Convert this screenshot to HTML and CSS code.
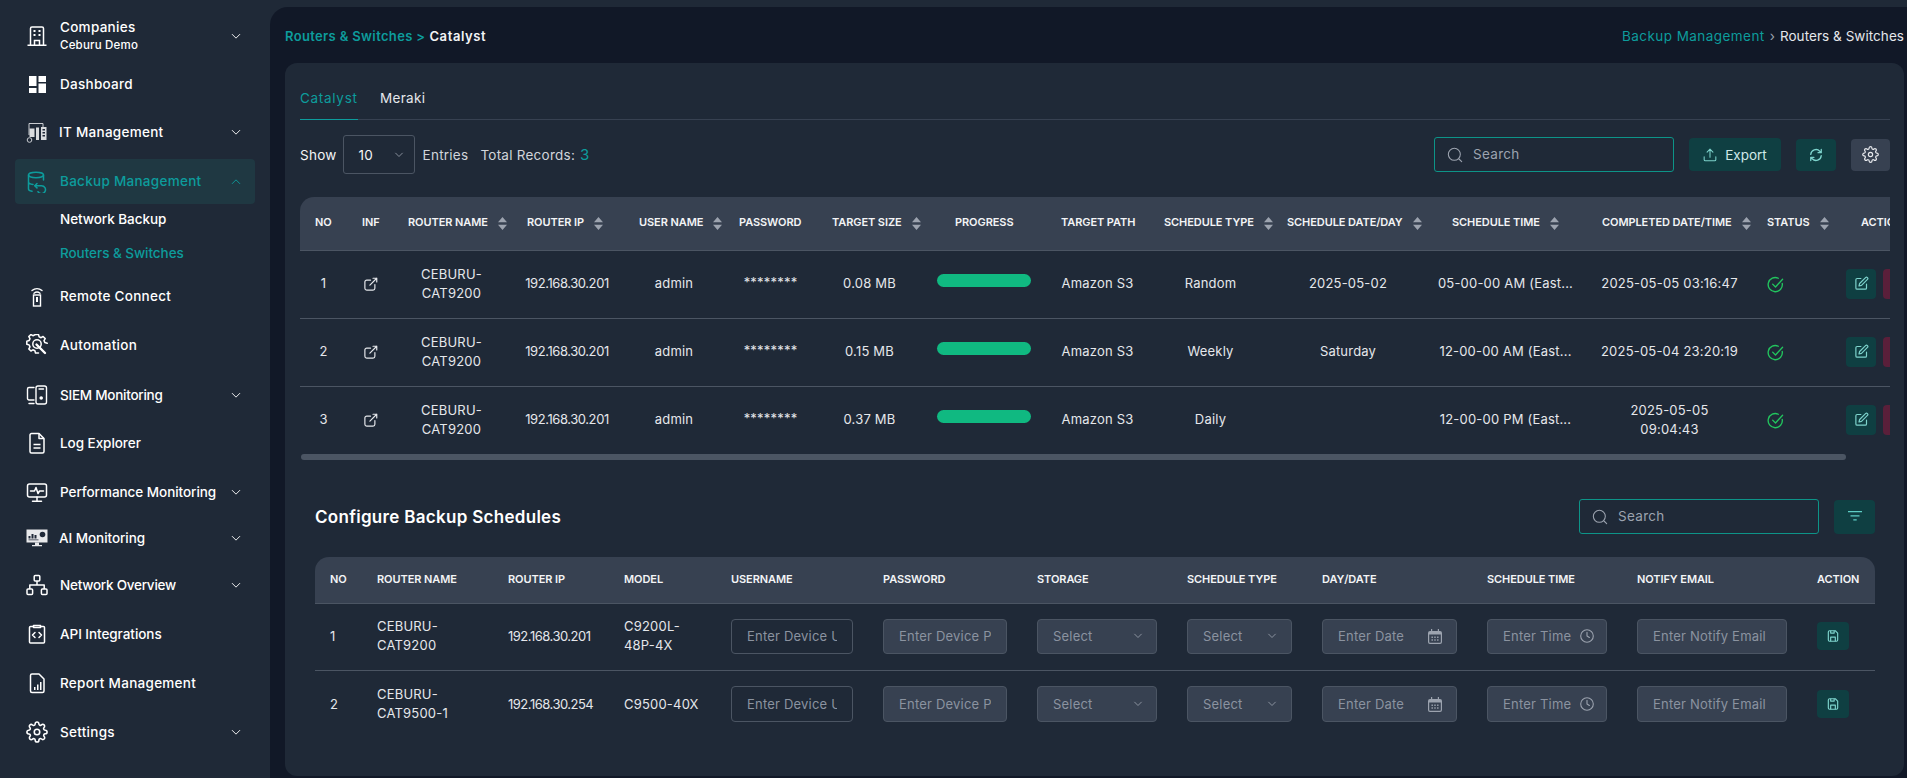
FILE: index.html
```html
<!DOCTYPE html>
<html lang="en">
<head>
<meta charset="utf-8">
<title>Routers &amp; Switches</title>
<link rel="stylesheet" href="styles.css">
</head>
<body>
<svg class="defs" width="0" height="0" aria-hidden="true">
  <symbol id="chev" viewBox="0 0 12 8"><path d="M1.5 1.5 6 6l4.5-4.5" fill="none" stroke="currentColor" stroke-width="1.1" stroke-linecap="round" stroke-linejoin="round"/></symbol>
  <symbol id="sort" viewBox="0 0 9 13"><path d="M4.5 0 9 5.2H0zM0 7.8h9L4.5 13z" fill="currentColor"/></symbol>
  <symbol id="ext" viewBox="0 0 24 24"><g fill="none" stroke="currentColor" stroke-width="1.9" stroke-linecap="round" stroke-linejoin="round"><path d="M12 5H6a3 3 0 0 0-3 3v10a3 3 0 0 0 3 3h10a3 3 0 0 0 3-3v-6"/><path d="M11 13 22 2M16 2h6v6"/></g></symbol>
  <symbol id="check" viewBox="0 0 24 24"><g fill="none" stroke="currentColor" stroke-width="1.9" stroke-linecap="round" stroke-linejoin="round"><path d="M21.5 10.5A10 10 0 1 1 16 3.2"/><path d="m8 11.5 4 4 10-11"/></g></symbol>
  <symbol id="edit" viewBox="0 0 24 24"><g fill="none" stroke="currentColor" stroke-width="1.9" stroke-linecap="round" stroke-linejoin="round"><path d="M11 4H5a2 2 0 0 0-2 2v13a2 2 0 0 0 2 2h13a2 2 0 0 0 2-2v-6"/><path d="M18.5 2.5a2.1 2.1 0 0 1 3 3L12 15l-4 1 1-4z"/></g></symbol>
  <symbol id="search" viewBox="0 0 24 24"><g fill="none" stroke="currentColor" stroke-width="1.6" stroke-linecap="round"><circle cx="11" cy="11" r="9"/><path d="m18 18 4 4"/></g></symbol>
  <symbol id="gear" viewBox="0 0 24 24"><g fill="none" stroke="currentColor" stroke-width="1.7" stroke-linecap="round" stroke-linejoin="round"><circle cx="12" cy="12" r="3"/><path d="M19.4 15a1.65 1.65 0 0 0 .33 1.82l.06.06a2 2 0 0 1 0 2.83 2 2 0 0 1-2.83 0l-.06-.06a1.65 1.65 0 0 0-1.82-.33 1.65 1.65 0 0 0-1 1.51V21a2 2 0 0 1-2 2 2 2 0 0 1-2-2v-.09A1.65 1.65 0 0 0 9 19.4a1.65 1.65 0 0 0-1.82.33l-.06.06a2 2 0 0 1-2.83 0 2 2 0 0 1 0-2.83l.06-.06a1.65 1.65 0 0 0 .33-1.82 1.65 1.65 0 0 0-1.51-1H3a2 2 0 0 1-2-2 2 2 0 0 1 2-2h.09A1.65 1.65 0 0 0 4.6 9a1.65 1.65 0 0 0-.33-1.82l-.06-.06a2 2 0 0 1 0-2.83 2 2 0 0 1 2.83 0l.06.06a1.65 1.65 0 0 0 1.82.33H9a1.65 1.65 0 0 0 1-1.51V3a2 2 0 0 1 2-2 2 2 0 0 1 2 2v.09a1.65 1.65 0 0 0 1 1.51 1.65 1.65 0 0 0 1.82-.33l.06-.06a2 2 0 0 1 2.83 0 2 2 0 0 1 0 2.83l-.06.06a1.65 1.65 0 0 0-.33 1.82V9a1.65 1.65 0 0 0 1.51 1H21a2 2 0 0 1 2 2 2 2 0 0 1-2 2h-.09a1.65 1.65 0 0 0-1.51 1z"/></g></symbol>
  <symbol id="cal" viewBox="0 0 14 15"><path d="M3 0h1.2v2H9.800V0H11v2h1a2 2 0 0 1 2 2v9a2 2 0 0 1-2 2H2a2 2 0 0 1-2-2V4a2 2 0 0 1 2-2h1zM1.200 5.500V13a.8.800 0 0 0 .8.800h10a.8.800 0 0 0 .8-.8V5.500z" fill="currentColor" fill-rule="evenodd"/><path d="M3.500 7.500h1.400v1.400H3.500zm2.800 0h1.400v1.400H6.300zm2.800 0h1.400v1.400H9.100zM3.500 10.300h1.400v1.400H3.500zm2.800 0h1.400v1.400H6.300zm2.800 0h1.400v1.400H9.100z" fill="currentColor"/></symbol>
  <symbol id="clock" viewBox="0 0 14 14"><g fill="none" stroke="currentColor" stroke-width="1.1" stroke-linecap="round" stroke-linejoin="round"><circle cx="7" cy="7" r="6.300"/><path d="M7 3.300V7l2.400 1.500"/></g></symbol>
  <symbol id="save" viewBox="0 0 24 24"><g fill="none" stroke="currentColor" stroke-width="2" stroke-linejoin="round"><path d="M4 5a2 2 0 0 1 2-2h10l4 4v12a2 2 0 0 1-2 2H6a2 2 0 0 1-2-2z"/><path d="M8 21v-7h8v7M8 3v4h6V3"/></g></symbol>
</svg>

<div class="app">
  <aside class="sidebar">
    <nav class="nav">
      <a class="item">
        <svg class="ico" viewBox="0 0 22 22"><g fill="none" stroke="#fff" stroke-width="1.500"><path d="M4.500 20V3.500a1.500 1.500 0 0 1 1.500-1.500h10a1.500 1.500 0 0 1 1.500 1.500V20M1.500 20.300h19M8.500 20v-4.500h5V20"/></g><path d="M7.500 5h2v2h-2zm5 0h2v2h-2zm-5 4h2v2h-2zm5 0h2v2h-2z" fill="#fff"/></svg>
        <span class="label stack"><span>Companies</span><small>Ceburu Demo</small></span>
        <svg class="chev"><use href="#chev"/></svg>
      </a>
      <a class="item">
        <svg class="ico" viewBox="0 0 22 22"><path d="M3 3h7.500v10H3zM12.500 3H20v6h-7.500zM3 15h7.500v5H3zM12.500 10.500H20V20h-7.500z" fill="#fff"/></svg>
        <span class="label">Dashboard</span>
      </a>
      <a class="item tight">
        <svg class="ico" viewBox="0 0 22 22"><g fill="none" stroke="#c9ccd1" stroke-width="1"><path d="M3 14V2.500h14V6"/><circle cx="3.500" cy="19" r="2.300"/></g><path d="M3.500 7.500h5V16h-5zM10 6.500h3V19h-3zM15 6h5.500v13H15z" fill="#d9dbde"/><path d="M16.500 8h2.500v1.500h-2.500zm0 3h2.500v1.500h-2.500zm0 3h2.500v1.500h-2.500z" fill="#202938"/></svg>
        <span class="label">IT Management</span>
        <svg class="chev"><use href="#chev"/></svg>
      </a>
      <a class="item active">
        <svg class="ico" viewBox="0 0 22 22"><g fill="none" stroke="currentColor" stroke-width="1.500" stroke-linecap="round" stroke-linejoin="round"><ellipse cx="10" cy="4" rx="7.500" ry="2.700"/><path d="M2.500 4v14c0 1.200 1.500 2 3.500 2.300M17.500 4v5M2.500 11c0 1.300 2 2.200 4.500 2.500"/><path d="M11 12.500 8.800 14.700l2.200 2.200"/><path d="M9 14.700h6.500a4 4 0 1 1-3.500 6"/></g></svg>
        <span class="label raise">Backup Management</span>
        <svg class="chev up"><use href="#chev"/></svg>
      </a>
      <div class="sub">
        <a class="sub-item tk">Network Backup</a>
        <a class="sub-item current tk">Routers &amp; Switches</a>
      </div>
      <a class="item after-sub">
        <svg class="ico" viewBox="0 0 22 22"><g fill="none" stroke="#fff" stroke-width="1.400" stroke-linecap="round"><path d="M6 5.500a8 8 0 0 1 10 0M8 8.200a4.800 4.800 0 0 1 6 0"/><rect x="7.500" y="10" width="7" height="11"/></g><path d="M10 12h2v5h-2z" fill="#fff"/></svg>
        <span class="label">Remote Connect</span>
      </a>
      <a class="item mt1">
        <svg class="ico" viewBox="0 0 22 22"><g fill="none" stroke="#fff" stroke-width="1.500" stroke-linejoin="round" stroke-linecap="round"><path d="M12.500 19h-3l-.6-2.300-2-.9-2 1.200-2.100-2.100 1.200-2-.9-2L.8 10.200v-3l2.300-.6.900-2-1.200-2L4.900.5l2 1.200 2-.9L9.500.5h3l.6 2.300 2 .9 2-1.200 2.100 2.100-1.200 2 .9 2 2.300.6"/><circle cx="11" cy="10" r="4.200"/></g><path d="M10.500 10.500 19 19" stroke="#fff" stroke-width="2.400" stroke-linecap="round"/></svg>
        <span class="label">Automation</span>
      </a>
      <a class="item mt2">
        <svg class="ico" viewBox="0 0 22 22"><g fill="none" stroke="#fff" stroke-width="1.400" stroke-linecap="round" stroke-linejoin="round"><path d="M8 16H3a1.500 1.500 0 0 1-1.500-1.500V5A1.500 1.500 0 0 1 3 3.500h5M3 19.500h5"/><rect x="10" y="2" width="10.500" height="18" rx="2"/><path d="M13 5h4.500"/></g><circle cx="15.200" cy="14" r="1.800" fill="#fff"/></svg>
        <span class="label tk2">SIEM Monitoring</span>
        <svg class="chev"><use href="#chev"/></svg>
      </a>
      <a class="item">
        <svg class="ico" viewBox="0 0 22 22"><g fill="none" stroke="#fff" stroke-width="1.500" stroke-linejoin="round"><path d="M4 3a1.500 1.500 0 0 1 1.500-1.500h7.500l5 5V19.500a1.500 1.500 0 0 1-1.500 1.500h-11A1.500 1.500 0 0 1 4 19.500z"/><path d="M13 1.500v5h5"/><path d="M7.500 12.500h7M7.500 16h7"/></g></svg>
        <span class="label tk">Log Explorer</span>
      </a>
      <a class="item mt1">
        <svg class="ico" viewBox="0 0 22 22"><g fill="none" stroke="#fff" stroke-width="1.500" stroke-linejoin="round" stroke-linecap="round"><rect x="1.500" y="3" width="19" height="13" rx="2"/><path d="M11 16v4M6.500 20.300h9M4.500 10h4l1.500-3.500 2 6 1.500-2.500h4"/></g></svg>
        <span class="label tk">Performance Monitoring</span>
        <svg class="chev"><use href="#chev"/></svg>
      </a>
      <a class="item tight mtn2">
        <svg class="ico" viewBox="0 0 22 22"><path d="M.5 2.500h21v13H.500z" fill="#e8e9eb"/><path d="M2.500 9h2v2.500h-2zm3-2h2v4.500h-2zm3 1h2v3.500h-2zM2.500 12.500h10v.8h-10z" fill="#202938"/><circle cx="16.500" cy="7.500" r="2.800" fill="#202938"/><path d="M9 15.500h4v2.500h3v1.200H6V18h3z" fill="#e8e9eb"/></svg>
        <span class="label tk">AI Monitoring</span>
        <svg class="chev"><use href="#chev"/></svg>
      </a>
      <a class="item mtn1">
        <svg class="ico" viewBox="0 0 22 22"><g fill="none" stroke="#fff" stroke-width="1.500" stroke-linejoin="round"><rect x="8.200" y="1.500" width="5.600" height="5.600" rx="1"/><rect x="1" y="15" width="5.600" height="5.600" rx="1"/><rect x="15.400" y="15" width="5.600" height="5.600" rx="1"/><path d="M11 7v4M3.800 15v-4h14.400v4"/></g></svg>
        <span class="label tk2">Network Overview</span>
        <svg class="chev"><use href="#chev"/></svg>
      </a>
      <a class="item mt1">
        <svg class="ico" viewBox="0 0 22 22"><g fill="none" stroke="#fff" stroke-width="1.500" stroke-linejoin="round" stroke-linecap="round"><path d="M7.500 3.500H4.500a1 1 0 0 0-1 1V19a1 1 0 0 0 1 1h13a1 1 0 0 0 1-1V4.500a1 1 0 0 0-1-1h-3"/><path d="M7.500 2.500h7v2h-7z"/><path d="M9 9.500 6.500 12 9 14.500M13 9.500l2.500 2.500-2.500 2.500"/></g></svg>
        <span class="label tk">API Integrations</span>
      </a>
      <a class="item mt1">
        <svg class="ico" viewBox="0 0 22 22"><path d="M4.500 3.500a1.500 1.500 0 0 1 1.500-1.500h7l5 5v12a1.500 1.500 0 0 1-1.500 1.500H6A1.500 1.500 0 0 1 4.500 19z" fill="none" stroke="#fff" stroke-width="1.500" stroke-linejoin="round"/><path d="M8 15h1.500v3H8zm3-2.500h1.500V18H11zm3-2.500h1.500v8H14z" fill="#fff"/></svg>
        <span class="label">Report Management</span>
      </a>
      <a class="item mt1">
        <svg class="ico gear-ico"><use href="#gear"/></svg>
        <span class="label">Settings</span>
        <svg class="chev"><use href="#chev"/></svg>
      </a>
    </nav>
  </aside>

  <main class="main">
    <header class="page-head">
      <div class="crumb-left"><span class="teal">Routers &amp; Switches &gt;</span><span class="crumb-now">Catalyst</span></div>
      <div class="crumb-right"><span class="teal crumb-root">Backup Management</span><span class="sep">›</span><span class="crumb-end">Routers &amp; Switches</span></div>
    </header>

    <section class="card">
      <div class="tabs">
        <a class="tab on">Catalyst</a>
        <a class="tab">Meraki</a>
      </div>

      <div class="toolbar">
        <div class="show">
          <span>Show</span>
          <div class="select-box"><span>10</span><svg class="chev small"><use href="#chev"/></svg></div>
          <span class="dim">Entries</span>
          <span class="total dim">Total Records:</span>
          <span class="teal count">3</span>
        </div>
        <div class="tools">
          <label class="search wide"><svg class="s-ico"><use href="#search"/></svg><input type="text" placeholder="Search"></label>
          <button class="btn export"><svg viewBox="0 0 24 24" class="btn-ico"><g fill="none" stroke="currentColor" stroke-width="1.800" stroke-linecap="round" stroke-linejoin="round"><path d="M2 15v5a2 2 0 0 0 2 2h16a2 2 0 0 0 2-2v-5M12 16V2M7 7l5-5 5 5"/></g></svg>Export</button>
          <button class="btn square"><svg viewBox="0 0 24 24" class="btn-ico"><g fill="none" stroke="currentColor" stroke-width="2.200" stroke-linecap="round" stroke-linejoin="round"><path d="M3 11a9 9 0 0 1 15.500-5.500L21 8M21 2.500V8h-5.500M21 13a9 9 0 0 1-15.500 5.500L3 16M3 21.500V16h5.500"/></g></svg></button>
          <button class="btn square gray"><svg class="btn-ico big"><use href="#gear"/></svg></button>
        </div>
      </div>

      <div class="table-clip">
        <table class="grid one">
          <colgroup>
            <col class="c-no"><col class="c-inf"><col class="c-rname"><col class="c-rip"><col class="c-user"><col class="c-pass"><col class="c-tsize"><col class="c-prog"><col class="c-tpath"><col class="c-stype"><col class="c-sdate"><col class="c-stime"><col class="c-comp"><col class="c-status"><col class="c-action">
          </colgroup>
          <thead>
            <tr>
              <th>NO</th>
              <th>INF</th>
              <th>ROUTER NAME<svg class="sort"><use href="#sort"/></svg></th>
              <th class="p-rip">ROUTER IP<svg class="sort"><use href="#sort"/></svg></th>
              <th>USER NAME<svg class="sort"><use href="#sort"/></svg></th>
              <th>PASSWORD</th>
              <th>TARGET SIZE<svg class="sort"><use href="#sort"/></svg></th>
              <th class="p-prog">PROGRESS</th>
              <th>TARGET PATH</th>
              <th>SCHEDULE TYPE<svg class="sort"><use href="#sort"/></svg></th>
              <th>SCHEDULE DATE/DAY<svg class="sort"><use href="#sort"/></svg></th>
              <th class="p-stime">SCHEDULE TIME<svg class="sort"><use href="#sort"/></svg></th>
              <th>COMPLETED DATE/TIME<svg class="sort"><use href="#sort"/></svg></th>
              <th>STATUS<svg class="sort"><use href="#sort"/></svg></th>
              <th class="p-action">ACTION</th>
            </tr>
          </thead>
          <tbody>
            <tr>
              <td>1</td>
              <td><svg class="ext"><use href="#ext"/></svg></td>
              <td>CEBURU-<br>CAT9200</td>
              <td class="ip">192.168.30.201</td>
              <td>admin</td>
              <td class="stars">********</td>
              <td>0.08 MB</td>
              <td><div class="bar"></div></td>
              <td>Amazon S3</td>
              <td>Random</td>
              <td>2025-05-02</td>
              <td>05-00-00 AM (East...</td>
              <td>2025-05-05 03:16:47</td>
              <td class="left"><svg class="check"><use href="#check"/></svg></td>
              <td class="left acts"><span class="act edit"><svg><use href="#edit"/></svg></span><span class="act del"></span></td>
            </tr>
            <tr>
              <td>2</td>
              <td><svg class="ext"><use href="#ext"/></svg></td>
              <td>CEBURU-<br>CAT9200</td>
              <td class="ip">192.168.30.201</td>
              <td>admin</td>
              <td class="stars">********</td>
              <td>0.15 MB</td>
              <td><div class="bar"></div></td>
              <td>Amazon S3</td>
              <td>Weekly</td>
              <td>Saturday</td>
              <td>12-00-00 AM (East...</td>
              <td>2025-05-04 23:20:19</td>
              <td class="left"><svg class="check"><use href="#check"/></svg></td>
              <td class="left acts"><span class="act edit"><svg><use href="#edit"/></svg></span><span class="act del"></span></td>
            </tr>
            <tr>
              <td>3</td>
              <td><svg class="ext"><use href="#ext"/></svg></td>
              <td>CEBURU-<br>CAT9200</td>
              <td class="ip">192.168.30.201</td>
              <td>admin</td>
              <td class="stars">********</td>
              <td>0.37 MB</td>
              <td><div class="bar"></div></td>
              <td>Amazon S3</td>
              <td>Daily</td>
              <td></td>
              <td>12-00-00 PM (East...</td>
              <td>2025-05-05<br>09:04:43</td>
              <td class="left"><svg class="check"><use href="#check"/></svg></td>
              <td class="left acts"><span class="act edit"><svg><use href="#edit"/></svg></span><span class="act del"></span></td>
            </tr>
          </tbody>
        </table>
      </div>
      <div class="scroll"><div class="thumb"></div></div>

      <div class="config">
        <div class="config-head">
          <h2>Configure Backup Schedules</h2>
          <div class="config-tools">
            <label class="search narrow"><svg class="s-ico"><use href="#search"/></svg><input type="text" placeholder="Search"></label>
            <button class="btn filter"><svg viewBox="0 0 14 11" class="filter-ico"><path d="M0 .7h14M2.500 4.800h9M5.300 8.900h3.400" fill="none" stroke="currentColor" stroke-width="1.300"/></svg></button>
          </div>
        </div>
        <table class="grid two">
          <colgroup>
            <col class="d-no"><col class="d-rname"><col class="d-rip"><col class="d-model"><col class="d-user"><col class="d-pass"><col class="d-stor"><col class="d-stype"><col class="d-day"><col class="d-time"><col class="d-mail"><col class="d-act">
          </colgroup>
          <thead>
            <tr>
              <th>NO</th><th>ROUTER NAME</th><th>ROUTER IP</th><th>MODEL</th><th>USERNAME</th><th>PASSWORD</th><th>STORAGE</th><th>SCHEDULE TYPE</th><th>DAY/DATE</th><th>SCHEDULE TIME</th><th>NOTIFY EMAIL</th><th>ACTION</th>
            </tr>
          </thead>
          <tbody>
            <tr class="r1">
              <td>1</td>
              <td>CEBURU-<br>CAT9200</td>
              <td class="ip">192.168.30.201</td>
              <td>C9200L-<br>48P-4X</td>
              <td><input class="field user" type="text" placeholder="Enter Device Username"></td>
              <td><input class="field filled pass" type="text" placeholder="Enter Device Password"></td>
              <td><div class="field filled picker stor"><span>Select</span><svg class="chev small"><use href="#chev"/></svg></div></td>
              <td><div class="field filled picker stype"><span>Select</span><svg class="chev small"><use href="#chev"/></svg></div></td>
              <td><div class="field filled picker date"><span>Enter Date</span><svg class="cal"><use href="#cal"/></svg></div></td>
              <td><div class="field filled picker time"><span>Enter Time</span><svg class="clock"><use href="#clock"/></svg></div></td>
              <td><input class="field filled mail" type="text" placeholder="Enter Notify Email"></td>
              <td><span class="save"><svg><use href="#save"/></svg></span></td>
            </tr>
            <tr class="r2">
              <td>2</td>
              <td>CEBURU-<br>CAT9500-1</td>
              <td class="ip">192.168.30.254</td>
              <td>C9500-40X</td>
              <td><input class="field user" type="text" placeholder="Enter Device Username"></td>
              <td><input class="field filled pass" type="text" placeholder="Enter Device Password"></td>
              <td><div class="field filled picker stor"><span>Select</span><svg class="chev small"><use href="#chev"/></svg></div></td>
              <td><div class="field filled picker stype"><span>Select</span><svg class="chev small"><use href="#chev"/></svg></div></td>
              <td><div class="field filled picker date"><span>Enter Date</span><svg class="cal"><use href="#cal"/></svg></div></td>
              <td><div class="field filled picker time"><span>Enter Time</span><svg class="clock"><use href="#clock"/></svg></div></td>
              <td><input class="field filled mail" type="text" placeholder="Enter Notify Email"></td>
              <td><span class="save"><svg><use href="#save"/></svg></span></td>
            </tr>
          </tbody>
        </table>
      </div>
    </section>
  </main>
</div>
</body>
</html>
```

FILE: styles.css
```css
* { box-sizing: border-box; }
html, body { margin: 0; height: 100%; }
body {
  background: #1f2937;
  color: #f3f4f6;
  font-family: Inter, "Noto Sans", "Liberation Sans", sans-serif;
  font-size: 13px;
  overflow: hidden;
}
.defs { position: absolute; }
.teal { color: #0d9c9c; }
.dim { color: #d1d5db; }
.app { display: flex; width: 1907px; height: 778px; }

/* Sidebar */
.sidebar { width: 270px; flex: none; }
.nav { display: flex; flex-direction: column; padding: 12px 15px 0; }
.item {
  display: flex; align-items: center; height: 48px; padding: 0 14px 0 11px;
  color: #fff; font-size: 13.5px; font-weight: 500; letter-spacing: .28px;
}
.ico { width: 22px; height: 22px; flex: none; margin-right: 12px; }
.gear-ico { color: #fff; }
.tight .ico { margin-right: 11px; }
.label { flex: 1; white-space: nowrap; }
.label.tk, .sub-item.tk { letter-spacing: -.05px; }
.label.tk2 { letter-spacing: -.25px; }
.stack { display: flex; flex-direction: column; gap: 3px; line-height: 15px; }
.stack small { font-size: 11.5px; font-weight: 500; letter-spacing: .2px; }
.chev { width: 10px; height: 7px; flex: none; color: currentColor; }
.up { transform: rotate(180deg); }
.active {
  height: 45px; margin-top: 3px; background: #1f3842; border-radius: 4px; color: #0d9c9c;
}
.raise { padding-bottom: 2px; }
.sub { display: flex; flex-direction: column; gap: 4px; padding-left: 45px; }
.sub-item { height: 30px; line-height: 30px; color: #fff; font-size: 13.5px; font-weight: 500; white-space: nowrap; }
.current { color: #0d9c9c; }
.after-sub { margin-top: 4px; }
.mt1 { margin-top: 1px; }
.mt2 { margin-top: 2px; }
.mtn1 { margin-top: -1px; }
.mtn2 { margin-top: -2px; }

/* Main */
.main {
  flex: 1; min-width: 0; margin-top: 7px; padding: 0 3px 2px 15px;
  background: #111827; border-top-left-radius: 18px;
  display: flex; flex-direction: column;
}
.page-head { height: 56px; flex: none; display: flex; justify-content: space-between; align-items: center; padding-top: 2px; white-space: nowrap; }
.crumb-left { font-size: 13px; font-weight: 600; letter-spacing: .35px; color: #f3f4f6; }
.crumb-now { letter-spacing: .6px; margin-left: 4px; }
.crumb-right { font-size: 13.5px; color: #e5e7eb; display: flex; align-items: center; }
.crumb-root { letter-spacing: .45px; }
.crumb-end { letter-spacing: .05px; }
.sep { margin: 0 5px; color: #9ca3af; }

.card { flex: 1; background: #1f2937; border-radius: 12px; padding: 20px 14px 0 15px; min-height: 0; overflow: hidden; }
.tabs { display: flex; gap: 22px; height: 37px; border-bottom: 1px solid #374151; font-size: 13.5px; letter-spacing: .3px; }
.tab { height: 37px; line-height: 30px; color: #e5e7eb; }
.tab.on { color: #0d9c9c; border-bottom: 1.500px solid #0d9c9c; width: 58px; letter-spacing: .7px; }

.toolbar { display: flex; justify-content: space-between; align-items: center; margin-top: 15px; height: 39px; }
.show { display: flex; align-items: center; font-size: 13.5px; letter-spacing: .25px; }
.select-box {
  width: 72px; height: 39px; margin: 0 8px 0 6px; padding: 0 10px 0 15px;
  display: flex; align-items: center; justify-content: space-between;
  border: 1px solid #4b5563; border-radius: 3px;
}
.small { width: 10px; height: 6px; color: #9ca3af; }
.total { margin-left: 12px; margin-right: 5px; }
.count { font-size: 15px; }
.tools { display: flex; align-items: center; gap: 15px; }
.search {
  display: flex; align-items: center; height: 35px; padding: 0 12px;
  border: 1px solid #0d9488; border-radius: 3px;
}
.s-ico { width: 16px; height: 16px; flex: none; color: #9ca3af; margin-right: 8px; }
.search input { flex: 1; min-width: 0; border: 0; background: none; outline: 0; font: inherit; font-size: 13.5px; letter-spacing: .3px; color: #fff; padding: 0 0 2px 2px; }
.search input::placeholder { color: #9ca3af; opacity: 1; }
.wide { width: 240px; }
.narrow { width: 240px; }
.btn {
  display: flex; align-items: center; justify-content: center; border: 0; border-radius: 4px;
  background: #0f3f42; color: #cfe9e8; font: inherit; padding: 0;
}
.export { width: 92px; height: 33px; gap: 8px; font-size: 13.5px; }
.btn-ico { width: 14px; height: 14px; }
.big { width: 17px; height: 17px; }
.square { width: 40px; height: 32px; color: #7dd3cc; }
.gray { width: 39px; background: #374151; color: #e5e7eb; }
.export .btn-ico { color: #7dd3cc; }

/* Tables */
.table-clip { margin-top: 23px; width: 1590px; overflow: hidden; border-top-left-radius: 14px; }
.grid { border-collapse: collapse; table-layout: fixed; }
.grid th {
  background: #374151; color: #f3f4f6; font-size: 11px; font-weight: 600; letter-spacing: -.08px;
  text-align: left; white-space: nowrap; padding: 0 0 2px 15px; border-bottom: 1px solid #4b5563;
}
.grid td { padding: 0 0 1px; border-bottom: 1px solid #4b5563; color: #e5e7eb; line-height: 19px; letter-spacing: .2px; }
.grid tbody tr:last-child td { border-bottom: 0; }
.grid td.ip { letter-spacing: -.42px; }

.one { width: 1635px; }
.one th { height: 53px; }
.one td { height: 68px; text-align: center; }
.one td.left { text-align: left; padding-left: 15px; }
.c-no { width: 47px; } .c-inf { width: 46px; } .c-rname { width: 117px; } .c-rip { width: 114px; }
.c-user { width: 100px; } .c-pass { width: 93px; } .c-tsize { width: 105px; } .c-prog { width: 124px; }
.c-tpath { width: 103px; } .c-stype { width: 123px; } .c-sdate { width: 152px; } .c-stime { width: 163px; }
.c-comp { width: 165px; } .c-status { width: 80px; } .c-action { width: 103px; }
.grid th.p-rip { padding-left: 17px; }
.grid th.p-prog { padding-left: 33px; }
.grid th.p-stime { padding-left: 28px; }
.grid th.p-action { padding-left: 29px; }
.sort { width: 9px; height: 13px; color: #9ca3af; margin-left: 10px; vertical-align: middle; }
.ext { width: 15px; height: 15px; color: #e5e7eb; vertical-align: middle; }
.check { width: 17px; height: 17px; color: #22c55e; vertical-align: middle; }
.grid td.stars { padding-bottom: 3px; }
.bar { width: 94px; height: 13px; margin: -3px auto 3px; background: #10b981; border-radius: 7px; }
.one td.acts { white-space: nowrap; padding-left: 14px; }
.act { display: inline-flex; align-items: center; justify-content: center; width: 30px; height: 30px; border-radius: 4px; vertical-align: middle; }
.act svg { width: 15px; height: 15px; }
.edit { background: #0f3f42; color: #7dd3cc; }
.del { background: #5a1f3a; margin-left: 7px; }

.scroll { height: 6px; width: 1590px; }
.thumb { width: 1545px; height: 6px; margin-left: 1px; background: #4b5563; border-radius: 3px; }

.config { padding: 0 15px; margin-top: 39px; }
.config-head { display: flex; justify-content: space-between; align-items: center; height: 35px; }
.config-head h2 { margin: 0; font-size: 17px; font-weight: 600; letter-spacing: .3px; color: #fff; }
.config-tools { display: flex; align-items: center; gap: 15px; }
.filter { width: 41px; height: 34px; color: #5ecdc5; }
.filter-ico { width: 14px; height: 11px; }

table.two { margin-top: 23px; width: 1560px; }
table.two th { height: 46px; }
table.two th:first-child { border-top-left-radius: 14px; }
table.two th:last-child { border-top-right-radius: 14px; }
table.two td { padding-left: 15px; text-align: left; font-size: 13px; }
table.two td.ip { letter-spacing: -.5px; }
.r1 td { height: 67px; }
.r2 td { height: 69px; }
.d-no { width: 47px; } .d-rname { width: 131px; } .d-rip { width: 116px; } .d-model { width: 107px; }
.d-user { width: 152px; } .d-pass { width: 154px; } .d-stor { width: 150px; } .d-stype { width: 135px; }
.d-day { width: 165px; } .d-time { width: 150px; } .d-mail { width: 180px; } .d-act { width: 73px; }
.field {
  display: block; height: 35px; padding: 0 15px; border: 1px solid #4b5563; border-radius: 4px;
  background: transparent; font: inherit; font-size: 13px; letter-spacing: .2px; color: #9ca3af; outline: 0;
}
.field::placeholder { color: #8b93a0; opacity: 1; }
.filled { background: #374151; }
.picker { display: flex; align-items: center; justify-content: space-between; color: #8b93a0; }
.r2 .field { height: 36px; }
.user { width: 122px; } .pass { width: 124px; } .stor { width: 120px; padding-right: 13px; } .stype { width: 105px; padding-right: 14px; }
.date { width: 135px; padding-right: 14px; } .time { width: 120px; padding-right: 12px; } .mail { width: 150px; }
.cal { width: 14px; height: 15px; color: #9ca3af; }
.clock { width: 14px; height: 14px; color: #9ca3af; }
.save { display: flex; align-items: center; justify-content: center; width: 32px; height: 28px; background: #0f3f42; border-radius: 4px; color: #7dd3cc; }
.save svg { width: 14px; height: 14px; }
```
